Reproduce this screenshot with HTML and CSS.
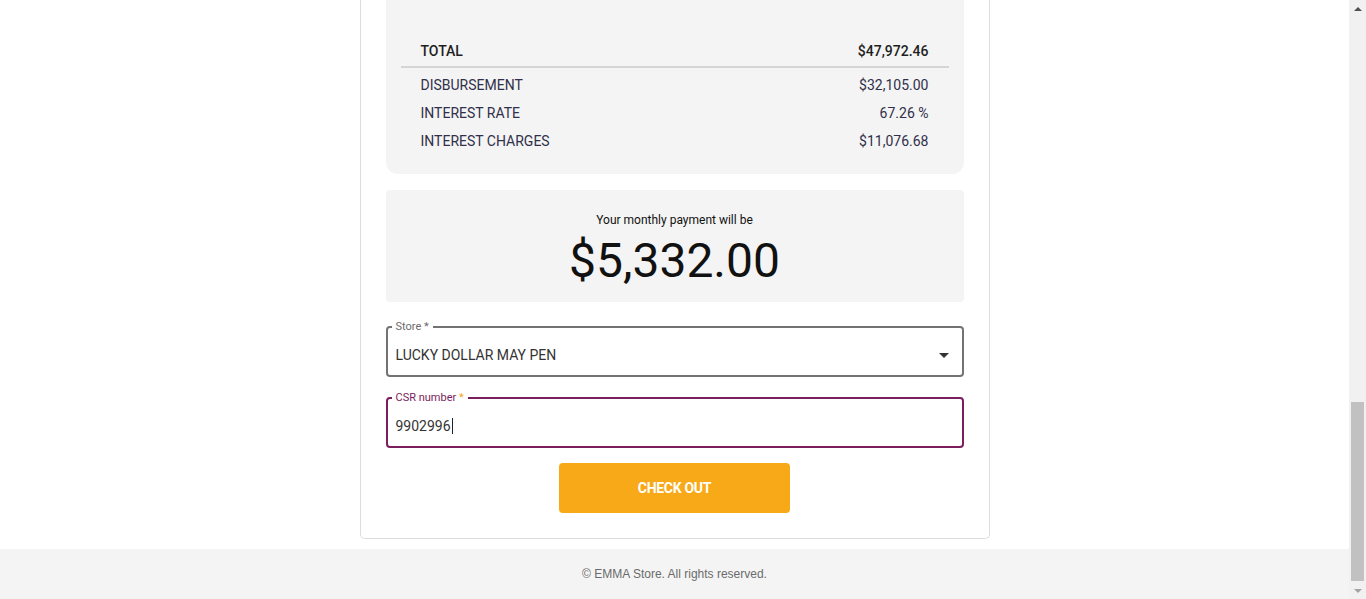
FILE: index.html
```html
<!DOCTYPE html>
<html lang="en">
<head>
<meta charset="utf-8">
<title>Checkout - EMMA Store</title>
<link rel="stylesheet" href="styles.css">
</head>
<body>
<div class="screen">
  <div class="page">
    <main class="main">
      <section class="card">
        <div class="summary">
          <div class="row row-total">
            <span>TOTAL</span>
            <span>$47,972.46</span>
          </div>
          <div class="rows">
            <div class="row"><span>DISBURSEMENT</span><span>$32,105.00</span></div>
            <div class="row"><span>INTEREST RATE</span><span>67.26 %</span></div>
            <div class="row"><span>INTEREST CHARGES</span><span>$11,076.68</span></div>
          </div>
        </div>

        <div class="monthly">
          <div class="monthly-label">Your monthly payment will be</div>
          <div class="monthly-amount">$5,332.00</div>
        </div>

        <form class="form">
          <fieldset class="field field-select">
            <legend class="field-label">Store *</legend>
            <div class="field-value">
              <span>LUCKY DOLLAR MAY PEN</span>
              <svg class="dropdown-icon" width="24" height="24" viewBox="0 0 24 24"><path d="M7 10l5 5 5-5z"/></svg>
            </div>
          </fieldset>

          <fieldset class="field field-focused">
            <legend class="field-label">CSR number <span class="req">*</span></legend>
            <div class="field-value">
              <span>9902996</span><span class="caret"></span>
            </div>
          </fieldset>

          <div class="actions">
            <button type="button" class="btn-checkout">CHECK OUT</button>
          </div>
        </form>
      </section>
    </main>
    <footer class="footer">© EMMA Store. All rights reserved.</footer>
  </div>
  <div class="scrollbar">
    <div class="sb-arrow sb-up"></div>
    <div class="sb-track">
      <div class="sb-thumb"></div>
    </div>
    <div class="sb-arrow sb-down"></div>
  </div>
</div>
</body>
</html>
```

FILE: styles.css
```css
* { box-sizing: border-box; }

html, body {
  margin: 0;
  padding: 0;
  height: 599px;
  overflow: hidden;
  background: #ffffff;
}

body {
  font-family: Roboto, "Liberation Sans", Arial, sans-serif;
  color: #333333;
}

.screen {
  display: flex;
  height: 599px;
}

.page {
  flex: 1;
  display: flex;
  flex-direction: column;
  min-width: 0;
}

.main {
  flex: 1;
  display: flex;
  justify-content: center;
  align-items: flex-start;
}

.card {
  width: 630px;
  border: 1px solid #dddddd;
  border-top: none;
  border-radius: 0 0 5px 5px;
  padding: 0 25px 25px;
  background: #ffffff;
}

/* Summary table */
.summary {
  background: #f4f4f4;
  border-radius: 0 0 12px 12px;
  padding: 36px 15px 19px;
}

.row {
  display: flex;
  justify-content: space-between;
  padding: 0 20px;
  font-size: 14px;
  line-height: 28px;
  color: #30304a;
}

.row-total {
  line-height: 30px;
  font-weight: 500;
  color: #1e1e1e;
  border-bottom: 2px solid #d5d5d5;
}

.rows {
  padding-top: 3px;
}

/* Monthly payment */
.monthly {
  margin-top: 16px;
  background: #f4f4f4;
  border-radius: 4px;
  padding: 22px 0 13px;
  text-align: center;
  color: #111111;
}

.monthly-label {
  font-size: 12px;
  line-height: 16px;
}

.monthly-amount {
  margin-top: 5px;
  font-size: 48px;
  line-height: 56px;
}

/* Form fields */
.form {
  margin: 19px 0 0;
}

.field {
  margin: 0;
  padding: 0 8px 0 4px;
  border: 2px solid #737373;
  border-radius: 4px;
  min-width: 0;
}

.field + .field {
  margin-top: 15px;
}

.field-label {
  padding: 0 4px;
  font-size: 11px;
  line-height: 12px;
  color: #6b6b6b;
}

.field-focused {
  border-color: #7b1e5d;
}

.field-focused .field-label {
  color: #7b1e5d;
}

.req {
  color: #f5a623;
}

.field-value {
  height: 42px;
  display: flex;
  align-items: center;
  justify-content: space-between;
  padding: 1px 0 0 4px;
  font-size: 14px;
  color: #333333;
}

.field-focused .field-value {
  justify-content: flex-start;
}

.dropdown-icon {
  fill: #333333;
  margin-right: -2px;
}

.caret {
  display: inline-block;
  width: 1px;
  height: 16px;
  background: #222222;
  margin-left: 1px;
}

.actions {
  display: flex;
  justify-content: center;
  margin-top: 15px;
}

.btn-checkout {
  width: 231px;
  height: 50px;
  border: none;
  border-radius: 4px;
  background: #f8a918;
  color: #ffffff;
  font-family: Roboto, "Liberation Sans", Arial, sans-serif;
  font-weight: 700;
  font-size: 14px;
  letter-spacing: -0.3px;
  cursor: pointer;
}

/* Footer */
.footer {
  margin-top: 10px;
  height: 50px;
  background: #f4f4f4;
  display: flex;
  align-items: center;
  justify-content: center;
  font-family: "Liberation Sans", Arial, sans-serif;
  font-size: 12px;
  color: #6b6b6b;
}

/* Scrollbar */
.scrollbar {
  width: 17px;
  flex: none;
  background: #f1f1f1;
  display: flex;
  flex-direction: column;
}

.sb-arrow {
  height: 17px;
  display: flex;
  align-items: center;
  justify-content: center;
}

.sb-up::before,
.sb-down::before {
  content: "";
  width: 0;
  height: 0;
  border-left: 4px solid transparent;
  border-right: 4px solid transparent;
}

.sb-up::before {
  border-bottom: 4px solid #505050;
}

.sb-down::before {
  border-top: 4px solid #a3a3a3;
}

.sb-track {
  flex: 1;
  display: flex;
  flex-direction: column;
  justify-content: flex-end;
  padding: 0 2px 1px;
}

.sb-thumb {
  height: 179px;
  background: #c1c1c1;
}
```
